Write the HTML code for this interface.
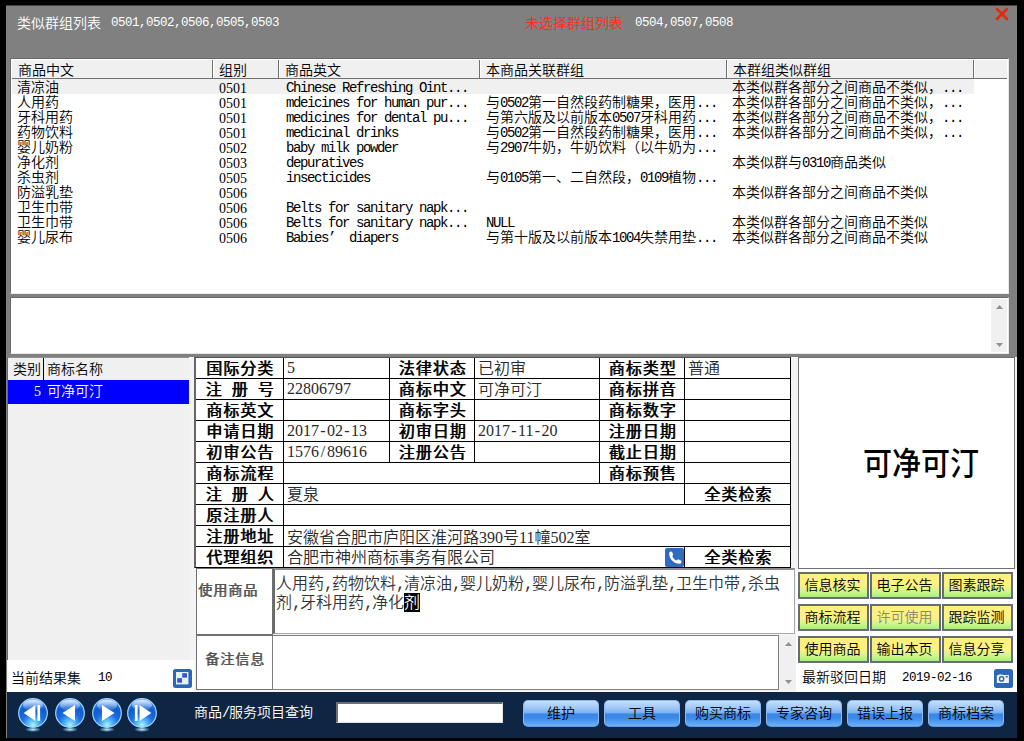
<!DOCTYPE html>
<html lang="zh-CN">
<head>
<meta charset="utf-8">
<title>商标查询</title>
<style>
html,body{margin:0;padding:0;}
body{width:1024px;height:741px;background:#000;overflow:hidden;position:relative;
 font-family:"Liberation Mono","Noto Sans CJK SC",monospace;font-size:14px;color:#000;font-weight:350;}
.abs{position:absolute;}
.t{position:absolute;white-space:nowrap;line-height:16px;height:16px;}
.n{font-family:"Liberation Mono","Noto Sans CJK SC",monospace;font-size:12.5px;letter-spacing:-0.5px;}
.m{letter-spacing:-1.4px;}
.d{font-family:"Liberation Serif","Noto Sans CJK SC",serif;}
.w{display:inline-block;width:.5em;text-align:center;}
#win{left:6px;top:5px;width:1011px;height:733px;background:#808080;box-sizing:border-box;border-top:1px solid #444;}
#lb1{left:10px;top:58px;width:999px;height:236px;background:#fff;box-sizing:border-box;border:1px solid #696969;border-right-color:#e8e8e8;border-bottom-color:#e8e8e8;}
#lb1h{left:1px;top:1px;width:995px;height:18px;background:#f0f0f0;border-bottom:1px solid #707070;}
.hd{position:absolute;top:0;height:18px;box-sizing:border-box;border-right:1px solid #707070;box-shadow:1px 0 0 #fff;}
.hd span{position:absolute;left:6px;top:3px;line-height:16px;white-space:nowrap;}
.row{position:absolute;left:1px;width:995px;height:15px;}
.row>span{position:absolute;top:2px;line-height:15px;height:15px;white-space:nowrap;}
.c1{left:5px}.c2{left:207px}.c3{left:274px}.c4{left:474px}.c5{left:720px}
#tb2{left:10px;top:297px;width:999px;height:57px;background:#fff;box-sizing:border-box;border:1px solid #696969;border-right-color:#e8e8e8;border-bottom-color:#e8e8e8;}
#lower{left:7px;top:357px;width:1010px;height:335px;background:#f4f4f4;}
#bar{left:7px;top:692px;width:1010px;height:46px;background:#0f2544;}
#lg{left:7px;top:357px;width:182px;height:303px;background:#f0f0f0;border-left:1px solid #696969;border-top:1px solid #909090;box-sizing:border-box;}
#lgh{left:0;top:0;width:181px;height:22px;background:#f0f0f0;}
#lgsel{left:0;top:22px;width:181px;height:24px;background:#0000ff;color:#fff;}
#tbl{left:194px;top:357px;width:597px;height:211px;background:#fff;box-sizing:border-box;border:1px solid #000;border-left:2px solid #666;border-top-color:#555;}
.hl{position:absolute;height:1px;background:#000;}
.vl{position:absolute;width:1px;background:#000;}
.lab{position:absolute;height:20px;line-height:20px;text-align:center;font-weight:400;text-shadow:0.8px 0 0 #000;font-size:16px;letter-spacing:1px;white-space:nowrap;word-spacing:3.5px;font-family:"Liberation Sans","Noto Sans CJK SC",sans-serif;}
.val{position:absolute;height:20px;line-height:20px;font-size:16px;white-space:nowrap;color:#2a2a2a;}
.box{position:absolute;box-sizing:border-box;background:#fff;}
.glab{position:absolute;font-weight:400;text-shadow:0.8px 0 0 #555;font-size:14px;letter-spacing:1px;color:#555;white-space:nowrap;line-height:16px;font-family:"Liberation Sans","Noto Sans CJK SC",sans-serif;}
.yb{position:absolute;width:71px;height:27px;box-sizing:border-box;border:2px solid #666c7a;padding-right:2px;background:linear-gradient(#ffef7e 0%,#fcf283 50%,#cdf58e 78%,#a2ee86 100%);text-align:center;line-height:24px;font-size:14px;white-space:nowrap;}
.bb{position:absolute;top:700px;width:76px;height:27px;border-radius:5px;box-sizing:border-box;text-align:center;line-height:26px;font-size:14px;white-space:nowrap;color:#000;
 background:linear-gradient(#c4defa 0%,#9cc6f6 30%,#7cb2f2 46%,#3a86e8 53%,#3c8aea 68%,#6cb0f4 100%);border:1px solid #8fb8ee;border-bottom-color:#5a9ae8;}
.orb{position:absolute;top:698px;width:30px;height:36px;}
</style>
</head>
<body>
<div id="win" class="abs"></div>
<div class="t" style="left:17px;top:16px;color:#fff;">类似群组列表</div>
<div class="t n" style="left:111px;top:15px;color:#fff;">0501,0502,0506,0505,0503</div>
<div class="t" style="left:525px;top:16px;color:#ff2a1a;">未选择群组列表</div>
<div class="t n" style="left:635px;top:15px;color:#fff;">0504,0507,0508</div>
<svg class="abs" style="left:995px;top:7px" width="14" height="14" viewBox="0 0 14 14"><path d="M2 2 L12 12 M12 2 L2 12" stroke="#e8280c" stroke-width="2.6" stroke-linecap="round"/></svg>

<div id="lb1" class="abs">
 <div id="lb1h" class="abs">
  <div class="hd" style="left:0;width:201px"><span>商品中文</span></div>
  <div class="hd" style="left:201px;width:66px"><span>组别</span></div>
  <div class="hd" style="left:267px;width:201px"><span>商品英文</span></div>
  <div class="hd" style="left:468px;width:247px"><span>本商品关联群组</span></div>
  <div class="hd" style="left:715px;width:247px"><span>本群组类似群组</span></div>
 </div>
<div class="row" style="top:20px;background:#f0f0f0;width:962px"><span class="c1">清凉油</span><span class="c2 d">0501</span><span class="c3 m">Chinese Refreshing Oint...</span><span class="c5">本类似群各部分之间商品不类似，<span class="m">...</span></span></div>
<div class="row" style="top:35px"><span class="c1">人用药</span><span class="c2 d">0501</span><span class="c3 m">mdeicines for human pur...</span><span class="c4">与<span class="m">0502</span>第一自然段药制糖果，医用<span class="m">...</span></span><span class="c5">本类似群各部分之间商品不类似，<span class="m">...</span></span></div>
<div class="row" style="top:50px"><span class="c1">牙科用药</span><span class="c2 d">0501</span><span class="c3 m">medicines for dental pu...</span><span class="c4">与第六版及以前版本<span class="m">0507</span>牙科用药<span class="m">...</span></span><span class="c5">本类似群各部分之间商品不类似，<span class="m">...</span></span></div>
<div class="row" style="top:65px"><span class="c1">药物饮料</span><span class="c2 d">0501</span><span class="c3 m">medicinal drinks</span><span class="c4">与<span class="m">0502</span>第一自然段药制糖果，医用<span class="m">...</span></span><span class="c5">本类似群各部分之间商品不类似，<span class="m">...</span></span></div>
<div class="row" style="top:80px"><span class="c1">婴儿奶粉</span><span class="c2 d">0502</span><span class="c3 m">baby milk powder</span><span class="c4">与<span class="m">2907</span>牛奶，牛奶饮料（以牛奶为<span class="m">...</span></span></div>
<div class="row" style="top:95px"><span class="c1">净化剂</span><span class="c2 d">0503</span><span class="c3 m">depuratives</span><span class="c5">本类似群与<span class="m">0310</span>商品类似</span></div>
<div class="row" style="top:110px"><span class="c1">杀虫剂</span><span class="c2 d">0505</span><span class="c3 m">insecticides</span><span class="c4">与<span class="m">0105</span>第一、二自然段，<span class="m">0109</span>植物<span class="m">...</span></span></div>
<div class="row" style="top:125px"><span class="c1">防溢乳垫</span><span class="c2 d">0506</span><span class="c5">本类似群各部分之间商品不类似</span></div>
<div class="row" style="top:140px"><span class="c1">卫生巾带</span><span class="c2 d">0506</span><span class="c3 m">Belts for sanitary napk...</span></div>
<div class="row" style="top:155px"><span class="c1">卫生巾带</span><span class="c2 d">0506</span><span class="c3 m">Belts for sanitary napk...</span><span class="c4"><span class="m">NULL</span></span><span class="c5">本类似群各部分之间商品不类似</span></div>
<div class="row" style="top:170px"><span class="c1">婴儿尿布</span><span class="c2 d">0506</span><span class="c3 m">Babies<span style="display:inline-block;width:14px;letter-spacing:0">’</span> diapers</span><span class="c4">与第十版及以前版本<span class="m">1004</span>失禁用垫<span class="m">...</span></span><span class="c5">本类似群各部分之间商品不类似</span></div>
</div>

<div id="tb2" class="abs">
 <div class="abs" style="left:980px;top:1px;width:16px;height:53px;background:#f0f0f0"></div>
 <svg class="abs" style="left:985px;top:7px" width="7" height="4"><path d="M0 4 L3.5 0 L7 4Z" fill="#909090"/></svg>
 <svg class="abs" style="left:985px;top:45px" width="7" height="4"><path d="M0 0 L3.5 4 L7 0Z" fill="#909090"/></svg>
</div>

<div id="lower" class="abs"></div>
<div id="bar" class="abs"></div>

<div id="lg" class="abs">
 <div id="lgh" class="abs"><div class="vl" style="left:35px;top:0;height:22px"></div>
  <div class="t" style="left:5px;top:4px">类别</div><div class="t" style="left:39px;top:4px">商标名称</div></div>
 <div id="lgsel" class="abs"><div class="vl" style="left:35px;top:0;height:24px;background:#0000c0"></div>
  <div class="t d" style="left:26px;top:4px">5</div><div class="t" style="left:39px;top:4px">可净可汀</div></div>
</div>
<div class="box" style="left:8px;top:660px;width:186px;height:32px"></div>
<div class="t" style="left:11px;top:671px">当前结果集</div>
<div class="t n" style="left:98px;top:670px">10</div>
<svg class="abs" style="left:173px;top:669px" width="19" height="19" viewBox="0 0 19 19"><rect width="19" height="19" rx="2.5" fill="#2c66b6"/><rect x="3" y="3" width="12.4" height="12.4" fill="#e6f2ff"/><rect x="9.2" y="4.2" width="4.8" height="4.4" fill="#3a55c8"/><rect x="4.2" y="9.2" width="4.8" height="4.5" fill="#3a55c8"/></svg>

<div id="tbl" class="abs">
<div class="hl" style="left:0;top:20px;width:594px"></div>
<div class="hl" style="left:0;top:41px;width:594px"></div>
<div class="hl" style="left:0;top:62px;width:594px"></div>
<div class="hl" style="left:0;top:83px;width:594px"></div>
<div class="hl" style="left:0;top:104px;width:594px"></div>
<div class="hl" style="left:0;top:125px;width:594px"></div>
<div class="hl" style="left:0;top:146px;width:594px"></div>
<div class="hl" style="left:0;top:167px;width:594px"></div>
<div class="hl" style="left:0;top:188px;width:594px"></div>
<div class="vl" style="left:87px;top:0;height:209px"></div>
<div class="vl" style="left:193px;top:0;height:104px"></div>
<div class="vl" style="left:278px;top:0;height:104px"></div>
<div class="vl" style="left:403px;top:0;height:125px"></div>
<div class="vl" style="left:488px;top:0;height:146px"></div>
<div class="vl" style="left:488px;top:188px;height:21px"></div>
<div class="lab" style="left:0px;top:1px;width:88px">国际分类</div>
<div class="lab" style="left:194px;top:1px;width:85px">法律状态</div>
<div class="lab" style="left:404px;top:1px;width:85px">商标类型</div>
<div class="lab" style="left:0px;top:22px;width:88px">注 册 号</div>
<div class="lab" style="left:194px;top:22px;width:85px">商标中文</div>
<div class="lab" style="left:404px;top:22px;width:85px">商标拼音</div>
<div class="lab" style="left:0px;top:43px;width:88px">商标英文</div>
<div class="lab" style="left:194px;top:43px;width:85px">商标字头</div>
<div class="lab" style="left:404px;top:43px;width:85px">商标数字</div>
<div class="lab" style="left:0px;top:64px;width:88px">申请日期</div>
<div class="lab" style="left:194px;top:64px;width:85px">初审日期</div>
<div class="lab" style="left:404px;top:64px;width:85px">注册日期</div>
<div class="lab" style="left:0px;top:85px;width:88px">初审公告</div>
<div class="lab" style="left:194px;top:85px;width:85px">注册公告</div>
<div class="lab" style="left:404px;top:85px;width:85px">截止日期</div>
<div class="lab" style="left:0px;top:106px;width:88px">商标流程</div>
<div class="lab" style="left:404px;top:106px;width:85px">商标预售</div>
<div class="lab" style="left:0px;top:127px;width:88px">注 册 人</div>
<div class="lab" style="left:489px;top:127px;width:106px">全类检索</div>
<div class="lab" style="left:0px;top:148px;width:88px">原注册人</div>
<div class="lab" style="left:0px;top:169px;width:88px">注册地址</div>
<div class="lab" style="left:0px;top:190px;width:88px">代理组织</div>
<div class="lab" style="left:489px;top:190px;width:106px">全类检索</div>
<div class="val d" style="left:91px;top:0px">5</div>
<div class="val " style="left:282px;top:2px">已初审</div>
<div class="val " style="left:492px;top:2px">普通</div>
<div class="val d" style="left:91px;top:21px">22806797</div>
<div class="val " style="left:282px;top:23px">可净可汀</div>
<div class="val d" style="left:91px;top:63px">2017<span class="w">-</span>02<span class="w">-</span>13</div>
<div class="val d" style="left:282px;top:63px">2017<span class="w">-</span>11<span class="w">-</span>20</div>
<div class="val d" style="left:91px;top:84px">1576<span class="w">/</span>89616</div>
<div class="val " style="left:91px;top:128px">夏泉</div>
<div class="val " style="left:91px;top:170px">安徽省合肥市庐阳区淮河路<span class="d">390</span>号<span class="d">11</span>幢<span class="d">502</span>室</div>
<div class="val " style="left:91px;top:191px">合肥市神州商标事务有限公司</div>
<svg class="abs" style="left:469px;top:190px" width="19" height="19" viewBox="0 0 19 19"><rect width="19" height="19" rx="2" fill="#2e6cc0"/><path d="M4.2 5.5 C4 4 5.5 3.2 6.6 3.7 C7.5 4.3 8 5.5 8 6.8 C8 7.6 7.5 8 7.4 8.6 C8.2 10.4 9.5 11.7 11.2 12.6 C11.9 12.2 12.4 11.6 13.2 11.6 C14.5 11.8 15.8 12.4 16.3 13.2 C16.8 14.3 16 15.8 14.6 15.8 C9 15.8 4.2 11 4.2 5.5Z" fill="#fff"/></svg>
</div>

<div class="box" style="left:196px;top:568px;width:77px;height:67px;border:1px solid #707070"></div>
<div class="glab" style="left:198px;top:582px">使用商品</div>
<div class="box" style="left:273px;top:568px;width:522px;height:66px;border:1px solid #a8a8a8;border-top:2px solid #8c8c8c;border-left:2px solid #6a6a6a;"></div>
<div class="abs" style="left:404px;top:593px;width:16px;height:19px;background:#000"></div>
<div class="abs" style="left:276px;top:576px;width:512px;font-size:16px;line-height:19px;color:#333;white-space:nowrap">人用药<span class="w">,</span>药物饮料<span class="w">,</span>清凉油<span class="w">,</span>婴儿奶粉<span class="w">,</span>婴儿尿布<span class="w">,</span>防溢乳垫<span class="w">,</span>卫生巾带<span class="w">,</span>杀虫<br>剂<span class="w">,</span>牙科用药<span class="w">,</span>净化<span style="color:#fff">剂</span></div>
<div class="box" style="left:196px;top:635px;width:77px;height:55px;border:1px solid #707070"></div>
<div class="glab" style="left:205px;top:651px">备注信息</div>
<div class="box" style="left:272px;top:635px;width:507px;height:55px;border:1px solid #808080"></div>
<div class="abs" style="left:780px;top:636px;width:16px;height:54px;background:#f0f0f0"></div>
<svg class="abs" style="left:785px;top:642px" width="7" height="4"><path d="M0 4 L3.5 0 L7 4Z" fill="#909090"/></svg>
<svg class="abs" style="left:785px;top:680px" width="7" height="4"><path d="M0 0 L3.5 4 L7 0Z" fill="#909090"/></svg>

<div class="box" style="left:798px;top:357px;width:217px;height:212px;border:1px solid #707070"></div>
<div class="abs" style="left:863px;top:442px;font-size:29px;font-weight:500;line-height:44px;transform:scaleY(1.08);font-family:'Liberation Sans','Noto Sans CJK SC',sans-serif;white-space:nowrap">可净可汀</div>
<div class="box" style="left:796px;top:569px;width:221px;height:123px"></div>
<div class="yb" style="left:798px;top:572px">信息核实</div>
<div class="yb" style="left:870px;top:572px">电子公告</div>
<div class="yb" style="left:942px;top:572px">图素跟踪</div>
<div class="yb" style="left:798px;top:604px">商标流程</div>
<div class="yb" style="left:870px;top:604px;color:#8a8a70">许可使用</div>
<div class="yb" style="left:942px;top:604px">跟踪监测</div>
<div class="yb" style="left:798px;top:636px">使用商品</div>
<div class="yb" style="left:870px;top:636px">输出本页</div>
<div class="yb" style="left:942px;top:636px">信息分享</div>
<div class="t" style="left:802px;top:670px">最新驳回日期</div>
<div class="t n" style="left:902px;top:670px">2019-02-16</div>
<svg class="abs" style="left:994px;top:669px" width="19" height="19" viewBox="0 0 19 19"><rect width="19" height="19" rx="2.5" fill="#2c66b6"/><path d="M2.8 6.4 L6 5.2 L9.5 6 L14.9 6 L14.9 13.9 L2.8 13.9Z" fill="#e8f2ff"/><circle cx="7.6" cy="9.9" r="2.8" fill="#44609a"/><circle cx="7.6" cy="9.9" r="1.4" fill="#fff"/><rect x="11.6" y="7.2" width="2.2" height="1.2" fill="#2a3f70"/></svg>
<svg width="0" height="0" style="position:absolute"><defs>
<radialGradient id="ob" cx="50%" cy="92%" r="80%"><stop offset="0" stop-color="#b8f2ff"/><stop offset="0.22" stop-color="#58bcfb"/><stop offset="0.5" stop-color="#1b6fe2"/><stop offset="0.8" stop-color="#0f5bd0"/><stop offset="1" stop-color="#2e80e6"/></radialGradient>
<linearGradient id="oh" x1="0" y1="0" x2="0" y2="1"><stop offset="0" stop-color="#fff" stop-opacity=".85"/><stop offset="1" stop-color="#fff" stop-opacity=".05"/></linearGradient>
<radialGradient id="og"><stop offset="0" stop-color="#e8fbff" stop-opacity=".95"/><stop offset="0.5" stop-color="#8fd8ff" stop-opacity=".6"/><stop offset="1" stop-color="#8fd8ff" stop-opacity="0"/></radialGradient>
</defs></svg><svg class="orb" style="left:18px" viewBox="0 0 30 36"><ellipse cx="15" cy="31.5" rx="8" ry="2.6" fill="url(#og)"/><circle cx="15" cy="15" r="14.3" fill="url(#ob)" stroke="#9ed8ff" stroke-width="1.2"/><ellipse cx="15" cy="7.2" rx="10" ry="5.6" fill="url(#oh)"/><path d="M5.7 15 L17.4 7 L17.4 23Z M19.4 7 h2.7 v16 h-2.7Z" fill="#fff"/></svg><svg class="orb" style="left:55px" viewBox="0 0 30 36"><ellipse cx="15" cy="31.5" rx="8" ry="2.6" fill="url(#og)"/><circle cx="15" cy="15" r="14.3" fill="url(#ob)" stroke="#9ed8ff" stroke-width="1.2"/><ellipse cx="15" cy="7.2" rx="10" ry="5.6" fill="url(#oh)"/><path d="M7.5 15 L20 7 L20 23Z" fill="#fff"/></svg><svg class="orb" style="left:92px" viewBox="0 0 30 36"><ellipse cx="15" cy="31.5" rx="8" ry="2.6" fill="url(#og)"/><circle cx="15" cy="15" r="14.3" fill="url(#ob)" stroke="#9ed8ff" stroke-width="1.2"/><ellipse cx="15" cy="7.2" rx="10" ry="5.6" fill="url(#oh)"/><path d="M22.5 15 L10 7 L10 23Z" fill="#fff"/></svg><svg class="orb" style="left:127px" viewBox="0 0 30 36"><ellipse cx="15" cy="31.5" rx="8" ry="2.6" fill="url(#og)"/><circle cx="15" cy="15" r="14.3" fill="url(#ob)" stroke="#9ed8ff" stroke-width="1.2"/><ellipse cx="15" cy="7.2" rx="10" ry="5.6" fill="url(#oh)"/><path d="M24.3 15 L12.6 7 L12.6 23Z M7.9 7 h2.7 v16 h-2.7Z" fill="#fff"/></svg>
<div class="t" style="left:194px;top:705px;color:#fff">商品<span class="m">/</span>服务项目查询</div>
<div class="box" style="left:336px;top:702px;width:167px;height:21px;border:1px solid #e0e0e0;border-top:2px solid #707070;border-left:2px solid #707070"></div>
<div class="bb" style="left:523px">维护</div>
<div class="bb" style="left:604px">工具</div>
<div class="bb" style="left:685px">购买商标</div>
<div class="bb" style="left:766px">专家咨询</div>
<div class="bb" style="left:847px">错误上报</div>
<div class="bb" style="left:928px">商标档案</div>

</body>
</html>
